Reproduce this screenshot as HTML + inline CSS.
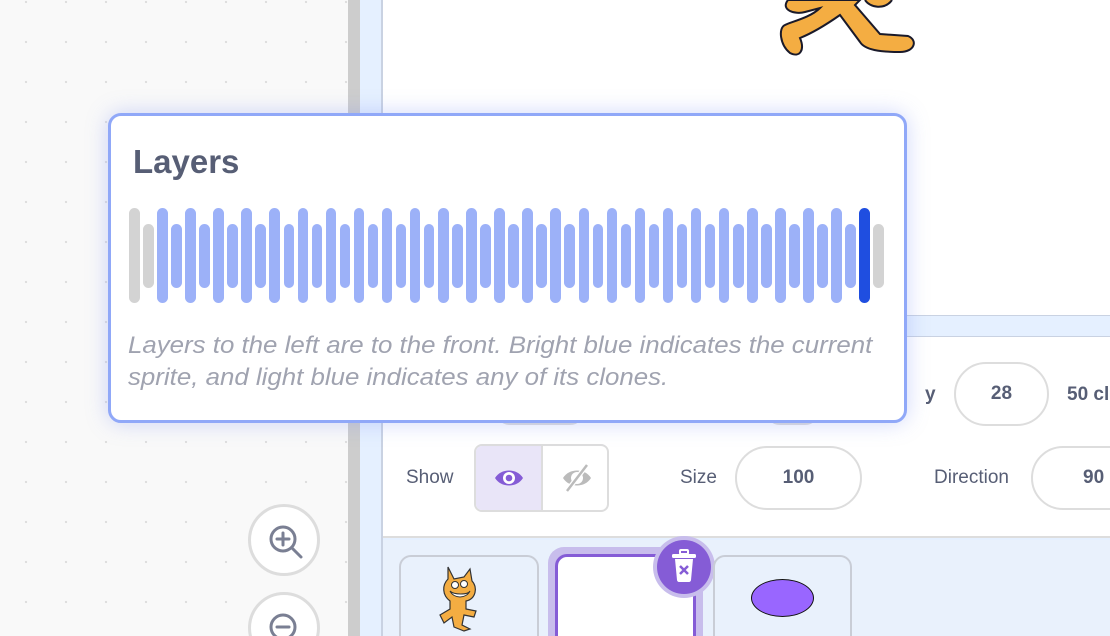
<!DOCTYPE html>
<html><head><style>
*{margin:0;padding:0;box-sizing:border-box}
html,body{width:1110px;height:636px;overflow:hidden}
body{position:relative;font-family:"Liberation Sans",sans-serif;background:#f9f9f9}
.ws{position:absolute;left:0;top:0;width:348px;height:636px;background-color:#f9f9f9;background-image:radial-gradient(circle,#ddd 1px,transparent 1.3px);background-size:40px 40px;background-position:6px 22px}
.a{position:absolute}
.pill{position:absolute;border:2px solid #ddd;border-radius:32px;background:#fff;color:#575e75;font-weight:bold;font-size:19px;display:flex;align-items:center;justify-content:center}
.lbl{position:absolute;color:#575e75;font-size:19px}
.bars{position:absolute;left:129px;top:208px;display:flex;gap:3.55px;align-items:center;height:95px}
.bars i{display:block;width:10.5px;border-radius:6px;background:#9cb1f8}
</style></head><body>
<div class="ws"></div>
<div class="a" style="left:348px;top:0;width:12px;height:636px;background:#cdcdcd"></div>
<div class="a" style="left:360px;top:0;width:750px;height:636px;background:#e5f0ff"></div>
<div class="a" style="left:381px;top:0;width:2px;height:636px;background:#c9d2e2"></div>
<div class="a" style="left:383px;top:0;width:727px;height:316px;background:#fff;border-bottom:1px solid #c9d2e2"></div>
<svg class="a" style="left:760px;top:0" width="170" height="60" viewBox="0 0 170 60">
<path d="M28 0 C20 10 35 15 45 12 L60 8 C50 18 30 22 25 25 C18 28 20 45 30 53 C40 58 45 50 40 38 C55 32 70 22 80 15 L100 42 C105 50 120 52 140 52 C155 52 158 40 148 36 L120 34 L95 5 L100 0 Z" fill="#f4ad42" stroke="#1a1a2a" stroke-width="2"/>
<path d="M105 0 C110 8 125 10 132 0" fill="#f4ad42" stroke="#1a1a2a" stroke-width="2"/>
</svg>
<div class="a" style="left:383px;top:336px;width:727px;height:202px;background:#fff;border-top:1px solid #c9d2e2;border-bottom:2px solid #ddd"></div>
<div class="a" style="left:495px;top:395px;width:90px;height:30px;border:2px solid #ddd;border-radius:30px"></div>
<div class="a" style="left:765px;top:395px;width:55px;height:30px;border:2px solid #ddd;border-radius:30px"></div>
<div class="lbl" style="left:925px;top:384px;font-weight:bold">y</div>
<div class="pill" style="left:954px;top:362px;width:95px;height:64px">28</div>
<div class="lbl" style="left:1067px;top:384px;font-weight:bold">50 cl</div>
<div class="lbl" style="left:406px;top:467px">Show</div>
<div class="a" style="left:474px;top:444px;width:135px;height:68px;border:2px solid #ddd;border-radius:8px;background:#fff;overflow:hidden">
 <div class="a" style="left:0;top:0;width:67px;height:64px;background:#e9e5f8;border-right:2px solid #ddd"></div>
 <svg class="a" style="left:18px;top:20px" width="30" height="24" viewBox="0 0 30 24"><path d="M1 12 C7 2 23 2 29 12 C23 22 7 22 1 12Z" fill="#855cd6"/><circle cx="15" cy="12" r="6" fill="#fff"/><circle cx="15" cy="12" r="3.3" fill="#855cd6"/></svg>
 <svg class="a" style="left:86px;top:18px" width="30" height="28" viewBox="0 0 30 28"><path d="M1 14 C7 4 23 4 29 14 C23 24 7 24 1 14Z" fill="#bbb"/><circle cx="15" cy="14" r="6" fill="#fff"/><path d="M5 27 L25 1" stroke="#fff" stroke-width="5"/><path d="M5 27 L25 1" stroke="#bbb" stroke-width="2.5"/></svg>
</div>
<div class="lbl" style="left:680px;top:467px">Size</div>
<div class="pill" style="left:735px;top:446px;width:127px;height:64px">100</div>
<div class="lbl" style="left:934px;top:467px">Direction</div>
<div class="pill" style="left:1031px;top:446px;width:120px;height:64px;justify-content:flex-start;padding-left:50px">90</div>
<div class="a" style="left:383px;top:540px;width:727px;height:96px;background:#e9f1fc"></div>
<div class="a" style="left:399px;top:555px;width:140px;height:100px;border:2px solid #c9cdd6;border-radius:12px;background:#e9f1fc"></div>
<svg class="a" style="left:436px;top:565px" width="52" height="68" viewBox="0 0 52 68">
<path d="M12 2 L18 14 L28 12 L34 4 L36 16 C42 22 40 34 30 36 L30 44 L40 46 L38 52 L28 50 L26 60 L34 64 L28 66 L18 62 L16 52 L8 58 L4 50 L14 44 L14 36 C6 30 6 20 12 14 Z" fill="#f4ad42" stroke="#333" stroke-width="1.2"/>
<path d="M14 26 C18 34 30 34 34 26 C32 30 18 30 14 26Z" fill="#fff" stroke="#333"/>
<circle cx="19" cy="20" r="3.5" fill="#fff" stroke="#333"/><circle cx="28" cy="19" r="3.5" fill="#fff" stroke="#333"/>
</svg>
<div class="a" style="left:548px;top:547px;width:155px;height:110px;border-radius:16px;background:#c8bdec"></div>
<div class="a" style="left:555px;top:554px;width:141px;height:100px;border:3px solid #855cd6;border-radius:12px;background:#fff"></div>
<div class="a" style="left:653px;top:536px;width:62px;height:62px;border-radius:50%;background:#c8bdec"></div>
<div class="a" style="left:657px;top:540px;width:54px;height:54px;border-radius:50%;background:#855cd6"></div>
<svg class="a" style="left:670px;top:549px" width="28" height="34" viewBox="0 0 28 34"><rect x="10" y="1" width="8" height="4" rx="1" fill="none" stroke="#fff" stroke-width="2"/><rect x="2" y="5" width="24" height="4" rx="1.5" fill="#fff"/><path d="M5 10 H23 L21 31 C21 32 20 33 19 33 H9 C8 33 7 32 7 31Z" fill="#fff"/><path d="M10 17 L18 25 M18 17 L10 25" stroke="#855cd6" stroke-width="2.5"/></svg>
<div class="a" style="left:713px;top:555px;width:139px;height:100px;border:2px solid #c9cdd6;border-radius:12px;background:#e9f1fc"></div>
<div class="a" style="left:751px;top:579px;width:63px;height:38px;border-radius:50%;background:#9966ff;border:1.5px solid #111"></div>
<div class="a" style="left:248px;top:504px;width:72px;height:72px;border-radius:50%;background:#fff;border:3px solid #ddd"></div>
<svg class="a" style="left:266px;top:522px" width="40" height="40" viewBox="0 0 40 40"><circle cx="17" cy="17" r="12" fill="none" stroke="#7a7f93" stroke-width="3"/><path d="M26 26 L35 35 M17 11 V23 M11 17 H23" stroke="#7a7f93" stroke-width="3" stroke-linecap="round"/></svg>
<div class="a" style="left:248px;top:592px;width:72px;height:72px;border-radius:50%;background:#fff;border:3px solid #ddd"></div>
<svg class="a" style="left:266px;top:610px" width="40" height="40" viewBox="0 0 40 40"><circle cx="17" cy="17" r="12" fill="none" stroke="#7a7f93" stroke-width="3"/><path d="M11 17 H23" stroke="#7a7f93" stroke-width="3" stroke-linecap="round"/></svg>
<div class="a" style="left:108px;top:113px;width:799px;height:310px;background:#fff;border:3px solid #90a8f8;border-radius:13px;box-shadow:0 0 22px rgba(120,140,240,.35)">
 <div class="a" style="left:22px;top:27px;font-size:33px;font-weight:bold;color:#575e75">Layers</div>
 <div class="a" style="left:17px;top:214px;width:770px;font-size:24.5px;font-style:italic;color:#a0a3b0;line-height:32px;white-space:nowrap;transform:scaleX(1.055);transform-origin:0 0">Layers to the left are to the front. Bright blue indicates the current<br>sprite, and light blue indicates any of its clones.</div>
</div>
<div class="bars">
<i style="height:95px;background:#d3d3d3"></i><i style="height:64px;background:#d3d3d3"></i>
<i style="height:95px"></i><i style="height:64px"></i><i style="height:95px"></i><i style="height:64px"></i><i style="height:95px"></i><i style="height:64px"></i><i style="height:95px"></i><i style="height:64px"></i><i style="height:95px"></i><i style="height:64px"></i>
<i style="height:95px"></i><i style="height:64px"></i><i style="height:95px"></i><i style="height:64px"></i><i style="height:95px"></i><i style="height:64px"></i><i style="height:95px"></i><i style="height:64px"></i><i style="height:95px"></i><i style="height:64px"></i>
<i style="height:95px"></i><i style="height:64px"></i><i style="height:95px"></i><i style="height:64px"></i><i style="height:95px"></i><i style="height:64px"></i><i style="height:95px"></i><i style="height:64px"></i><i style="height:95px"></i><i style="height:64px"></i>
<i style="height:95px"></i><i style="height:64px"></i><i style="height:95px"></i><i style="height:64px"></i><i style="height:95px"></i><i style="height:64px"></i><i style="height:95px"></i><i style="height:64px"></i><i style="height:95px"></i><i style="height:64px"></i>
<i style="height:95px"></i><i style="height:64px"></i><i style="height:95px"></i><i style="height:64px"></i><i style="height:95px"></i><i style="height:64px"></i><i style="height:95px"></i><i style="height:64px"></i><i style="height:95px"></i><i style="height:64px"></i>
<i style="height:95px;background:#1f4ee0"></i><i style="height:64px;background:#d3d3d3"></i>
</div>
</body></html>
